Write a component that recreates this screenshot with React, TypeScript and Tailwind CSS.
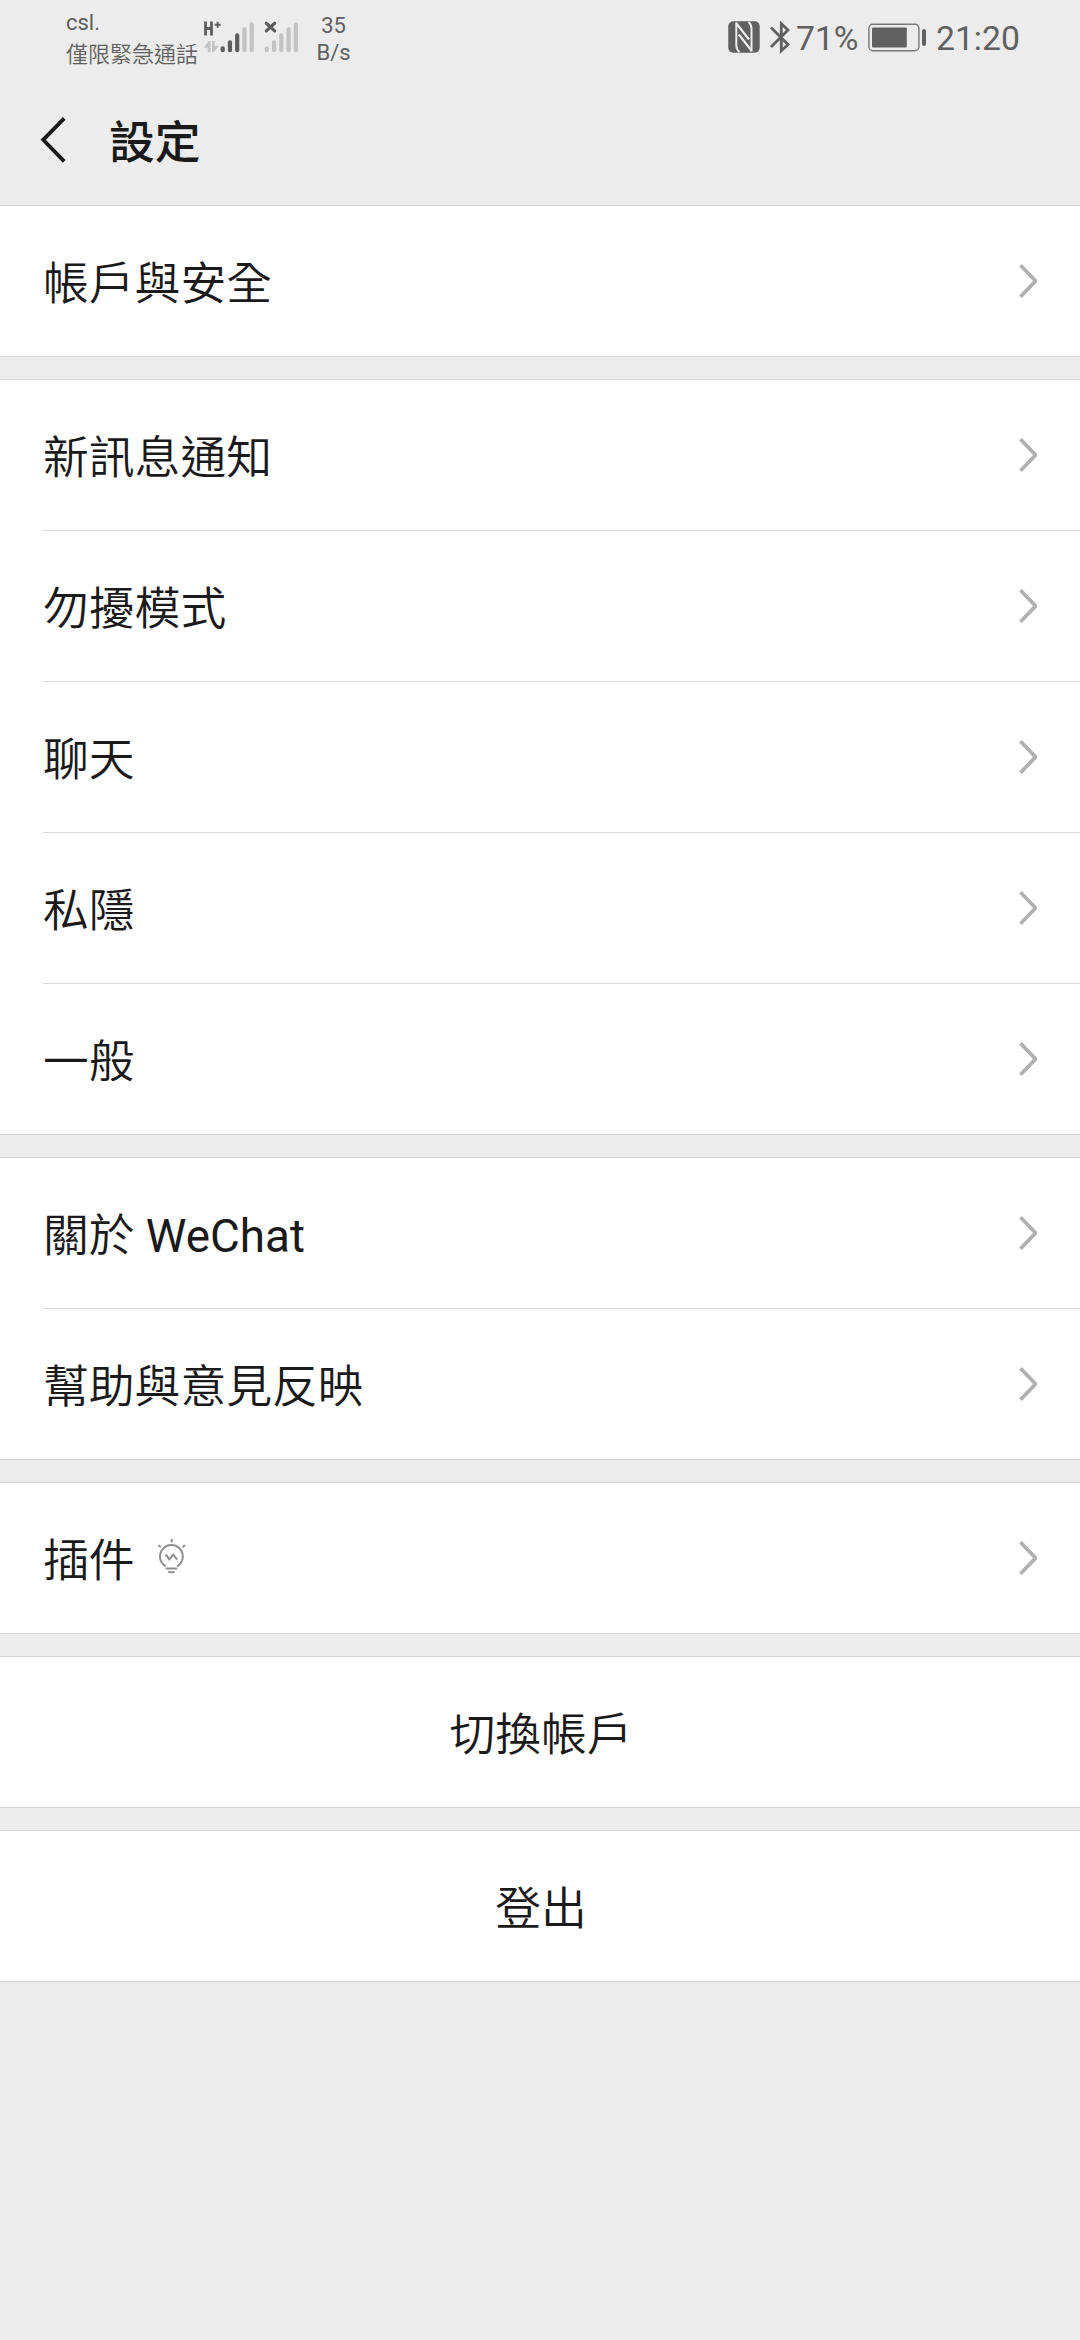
import { ReactNode } from "react"

interface Item {
  label: ReactNode
  icon?: ReactNode
}

const BulbIcon = () => (
  <svg className="ml-[22px] mb-1 h-[36px] w-[30px]" viewBox="0 0 30 36" fill="none" stroke="#8f8f8f" strokeWidth="2">
    <path d="M14.7 1v3.4M1.3 7.3l2.6 1.8M28.1 7.3l-2.6 1.8" />
    <path d="M8.6 28.3a11.4 11.4 0 1 1 11.6 0" />
    <path d="M8.6 30.5h11.6M11.2 33.5c1.5 1 4.9 1 6.4 0" />
    <path d="M8.6 16.3l3.7 5 3.9-4.7 4 5" />
  </svg>
)

const groups: Item[][] = [
  [{ label: "帳戶與安全" }],
  [
    { label: "新訊息通知" },
    { label: "勿擾模式" },
    { label: "聊天" },
    { label: "私隱" },
    { label: "一般" },
  ],
  [{ label: <>關於 <span className="font-normal">WeChat</span></> }, { label: "幫助與意見反映" }],
  [{ label: "插件", icon: <BulbIcon /> }],
]

const actions = ["切換帳戶", "登出"]

const Chevron = () => (
  <svg className="mr-[42px] mb-px h-[36px] w-[19px]" viewBox="0 0 19 36" fill="none" stroke="#b0b0b0" strokeWidth="3.8" strokeLinejoin="bevel">
    <path d="M1.5 2.2L16.6 18L1.5 33.8" />
  </svg>
)

// bars grow from left to right, only the first `level` ones are lit
const SignalBars = ({ level }: { level: number }) => {
  const heights = [6, 12, 19, 25, 30]
  return (
    <g>
      {heights.map((h, index) => (
        <rect key={h} x={index * 7.25} y={30.5 - h} width="4.2" height={h} rx="2" fill={index < level ? "#5e5e5e" : "#c3c3c3"} />
      ))}
    </g>
  )
}

const StatusBar = () => (
  <div className="flex h-[74px] items-start text-[#606060]">
    <div className="ml-[66px] w-[137px] pt-[7px] text-[22px] leading-[31px]">
      <div>csl.</div>
      <div className="mt-px whitespace-nowrap font-[350]">僅限緊急通話</div>
    </div>
    <svg className="mt-[21px] h-[32px] w-[96px]" viewBox="0 0 96 32">
      <path d="M2.5 .5v14M8.5 .5v14M2.5 7.5h6" fill="none" stroke="#5e5e5e" strokeWidth="2.8" />
      <path d="M14.7 .8v6M11.7 3.8h6" fill="none" stroke="#5e5e5e" strokeWidth="2" />
      <path d="M.8 26.8l5-6.8h1.7v11.2h-2.7v-4.4zM15.7 25l-5 6.2h-1.7v-11.2h2.7v5z" fill="#c3c3c3" />
      <g transform="translate(17.6 .8)"><SignalBars level={3} /></g>
      <path d="M63.3 2.3l8.4 7.6M71.7 2.3l-8.4 7.6" fill="none" stroke="#5e5e5e" strokeWidth="3.2" strokeLinecap="round" />
      <g transform="translate(61.7 .8)"><SignalBars level={0} /></g>
    </svg>
    <div className="ml-[14px] w-[41px] pt-[12px] text-center text-[22px] leading-[27px]">
      <div>35</div>
      <div>B/s</div>
    </div>
    <div className="ml-auto mr-[59px] flex items-start text-[33.7px] leading-[40px]">
      <svg className="mt-[21px] h-[32px] w-[32px]" viewBox="0 0 32 32">
        <rect x=".3" y=".3" width="31.4" height="31.4" rx="5" fill="#606060" />
        <g fill="none" stroke="#ececec">
          <path d="M8.3 1.5v23q0 4 3.2 6.5" strokeWidth="2" />
          <path d="M23.5 30.5v-23q0-4-3-6.5" strokeWidth="2" />
          <path d="M8 2L21 18.5M23.8 30L10.8 13.5" strokeWidth="2.2" />
        </g>
      </svg>
      <svg className="ml-[10px] mt-[21px] h-[33px] w-[20px]" viewBox="0 0 20 33" fill="none" stroke="#606060" strokeWidth="2.8">
        <path d="M1 6.5L18 23.5L11.3 29.8V2.7L18 9L1 26" />
      </svg>
      <div className="ml-[6px] mt-[19px] w-[64px]">71%</div>
      <svg className="ml-[8px] mt-[23px] h-[29px] w-[59px]" viewBox="0 0 59 29">
        <rect x=".9" y="1.3" width="50" height="26.4" rx="4" fill="none" stroke="#777777" strokeWidth="1.4" />
        <rect x="4" y="4.5" width="34.8" height="20" rx="1" fill="#606060" />
        <rect x="54" y="6" width="4" height="17" rx="2" fill="#606060" />
      </svg>
      <div className="ml-[9px] mt-[19px] w-[85px]">21:20</div>
    </div>
  </div>
)

const Header = () => (
  <header className="flex h-[131px] items-center">
    <svg className="ml-[40px] h-[48px] w-[28px]" viewBox="0 0 28 48" fill="none" stroke="#1a1a1a" strokeWidth="3.8">
      <path d="M24.2 2.3L3.2 23.8L24.2 45.3" />
    </svg>
    <h1 className="ml-[41px] pt-[9px] text-[45.8px] leading-[60px] font-medium">設定</h1>
  </header>
)

const Section = ({ children }: { children: ReactNode }) => (
  <section className="mb-[22px] border-y border-[#d5d5d5] bg-white">{children}</section>
)

export default function App() {
  return (
    <div lang="zh-Hant" className="h-[2340px] w-[1080px] overflow-hidden bg-[#ececec] font-[Roboto,'Noto_Sans_CJK_TC',sans-serif] text-[#1a1a1a]">
      <StatusBar />
      <Header />
      <main className="text-[45.8px] leading-[60px] font-[350]">
        {groups.map((items, i) => (
          <Section key={i}>
            {items.map((item, index) => (
              <div key={index} className="pl-[43px]">
                {index > 0 && <div className="h-px bg-[#d9d9d9]" />}
                <div className="flex h-[150px] items-center">
                  <div className="pt-[8px]">{item.label}</div>
                  {item.icon}
                  <div className="ml-auto"><Chevron /></div>
                </div>
              </div>
            ))}
          </Section>
        ))}
        {actions.map((label) => (
          <Section key={label}>
            <button className="flex h-[150px] w-full items-center justify-center pt-[8px] pl-[2px]">{label}</button>
          </Section>
        ))}
      </main>
    </div>
  )
}
